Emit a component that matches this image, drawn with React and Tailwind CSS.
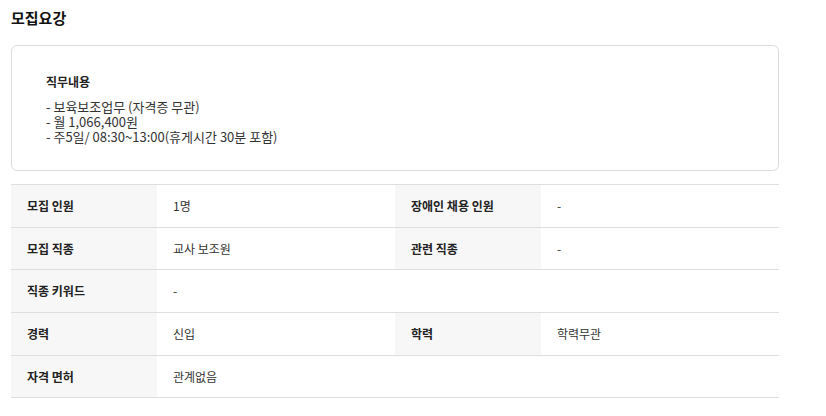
import React from "react";

const font = { fontFamily: '"Noto Sans CJK KR", "Noto Sans", sans-serif' };

function Row({ h, cells }) {
  return (
    <div className={`grid grid-cols-[146px_238px_146px_238px] border-b border-[#dedede] ${h}`}>
      {cells.map((c, i) =>
        c.head ? (
          <div key={i} className="bg-[#f7f7f7] flex items-center pl-[16px] text-[12px] font-bold text-[#222]">
            {c.t}
          </div>
        ) : (
          <div key={i} className={`flex items-center pl-[16px] text-[12px] text-[#333] ${c.span ? "col-span-3" : ""}`}>
            {c.t}
          </div>
        )
      )}
    </div>
  );
}

export default function App() {
  return (
    <div className="w-[826px] h-[416px] bg-white px-[11px] overflow-hidden" style={font}>
      <div className="w-[768px]">
        <h2 className="pt-[8px] h-[45px] text-[15px] font-bold text-[#111] leading-[20px]">모집요강</h2>
        <div className="h-[126px] border border-[#dcdcdc] rounded-[6px] pl-[34px] pt-[27px]">
          <div className="text-[12px] font-bold text-[#222] leading-[18px]">직무내용</div>
          <div className="mt-[8px] text-[13px] text-[#333] leading-[15px]">
            <div>- 보육보조업무 (자격증 무관)</div>
            <div>- 월 1,066,400원</div>
            <div>- 주5일/ 08:30~13:00(휴게시간 30분 포함)</div>
          </div>
        </div>
        <div className="mt-[13px] border-t border-[#dedede]">
          <Row h="h-[43px]" cells={[{ head: 1, t: "모집 인원" }, { t: "1명" }, { head: 1, t: "장애인 채용 인원" }, { t: "-" }]} />
          <Row h="h-[42px]" cells={[{ head: 1, t: "모집 직종" }, { t: "교사 보조원" }, { head: 1, t: "관련 직종" }, { t: "-" }]} />
          <Row h="h-[43px]" cells={[{ head: 1, t: "직종 키워드" }, { t: "-", span: 1 }]} />
          <Row h="h-[43px]" cells={[{ head: 1, t: "경력" }, { t: "신입" }, { head: 1, t: "학력" }, { t: "학력무관" }]} />
          <Row h="h-[42px]" cells={[{ head: 1, t: "자격 면허" }, { t: "관계없음", span: 1 }]} />
        </div>
      </div>
    </div>
  );
}
